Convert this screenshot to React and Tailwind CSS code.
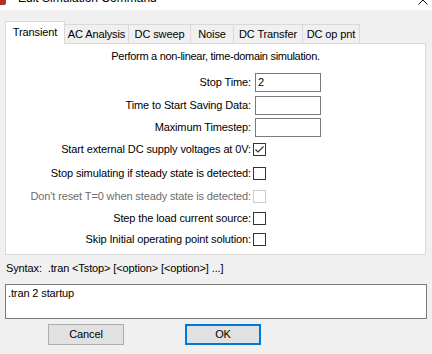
import React from "react";

const F = "font-['Liberation_Sans',Arial,sans-serif] tracking-[-0.12px]";

function TextBox({ value }) {
  return (
    <div className="w-[66px] h-[19px] border border-[#7a7a7a] bg-white pl-[2px] text-[11px] leading-[17px] text-black">
      {value}
    </div>
  );
}

function Check({ checked, disabled }) {
  return (
    <div
      className={
        "w-[13px] h-[13px] border bg-white flex items-center justify-center " +
        (disabled ? "border-[#cccccc]" : "border-[#333333]")
      }
    >
      {checked && (
        <svg width="11" height="11" viewBox="0 0 11 11">
          <polyline points="1.5,5.5 4,8 9.5,2.5" fill="none" stroke="#333333" strokeWidth="1.2" />
        </svg>
      )}
    </div>
  );
}

function InputRow({ label, value, className }) {
  return (
    <div className={"flex items-center h-[19px] " + (className || "")}>
      <div className="w-[245px] text-right text-[11px] leading-[13px] text-black">{label}</div>
      <div className="ml-[4px]">
        <TextBox value={value} />
      </div>
    </div>
  );
}

function CheckRow({ label, checked, disabled, className }) {
  return (
    <div className={"flex items-center h-[13px] " + (className || "")}>
      <div
        className={
          "w-[245px] text-right text-[11px] leading-[13px] whitespace-nowrap " +
          (disabled ? "text-[#6d6d6d]" : "text-black")
        }
      >
        {label}
      </div>
      <div className="ml-[2px]">
        <Check checked={checked} disabled={disabled} />
      </div>
    </div>
  );
}

const tabs = [
  { label: "AC Analysis", w: "w-[65px]" },
  { label: "DC sweep", w: "w-[63px]" },
  { label: "Noise", w: "w-[44px]" },
  { label: "DC Transfer", w: "w-[70px]" },
  { label: "DC op pnt", w: "w-[58px]" },
];

export default function App() {
  return (
    <div className={"w-[432px] h-[354px] bg-[#f0f0f0] overflow-hidden " + F}>
      {/* title bar */}
      <div className="h-[10px] bg-white overflow-hidden flex items-start">
        <div className="w-[6px] h-[5px] bg-[#b0302a] mt-0 rounded-br-[2px]" />
        <div className="ml-[12px] -mt-[9px] text-[12px] leading-[14px] text-black whitespace-nowrap tracking-normal">
          Edit Simulation Command
        </div>
        <svg className="ml-auto mr-[4px] -mt-[5px]" width="10" height="10" viewBox="0 0 10 10">
          <path d="M0.5 0.5 L9.5 9.5 M9.5 0.5 L0.5 9.5" stroke="#111" strokeWidth="1" />
        </svg>
      </div>

      <div className="px-[5px]">
        {/* tabs */}
        <div className="mt-[11px] h-[22px] flex items-end">
          <div className="relative z-10 -mb-px w-[60px] h-[23px] bg-white border border-b-0 border-[#d9d9d9] text-[11px] leading-[20px] text-black text-center">
            Transient
          </div>
          {tabs.map((t) => (
            <div
              key={t.label}
              className={
                "-ml-px h-[19px] border border-b-0 border-[#d9d9d9] bg-[#f0f0f0] text-[11px] leading-[18px] text-black text-center " +
                t.w
              }
            >
              {t.label}
            </div>
          ))}
        </div>

        {/* panel */}
        <div className="w-[421px] h-[212px] bg-white border border-[#d9d9d9] pt-[6px]">
          <div className="h-[13px] text-[11px] leading-[13px] text-black text-center tracking-[-0.3px]">
            Perform a non-linear, time-domain simulation.
          </div>
          <InputRow className="mt-[10px]" label="Stop Time:" value="2" />
          <InputRow className="mt-[4px]" label="Time to Start Saving Data:" value="" />
          <InputRow className="mt-[3px]" label="Maximum Timestep:" value="" />
          <CheckRow className="mt-[6px]" label="Start external DC supply voltages at 0V:" checked />
          <CheckRow className="mt-[11px]" label="Stop simulating if steady state is detected:" />
          <CheckRow className="mt-[10px]" label="Don't reset T=0 when steady state is detected:" disabled />
          <CheckRow className="mt-[9px]" label="Step the load current source:" />
          <CheckRow className="mt-[8px]" label="Skip Initial operating point solution:" />
        </div>

        {/* syntax */}
        <div className="mt-[7px] pl-[1px] h-[13px] text-[11px] leading-[13px] text-black whitespace-pre">
          {"Syntax:  .tran <Tstop> [<option> [<option>] ...]"}
        </div>

        {/* command text */}
        <div className="mt-[9px] w-[422px] h-[35px] border border-[#7a7a7a] bg-white px-[2px] pt-[2px] text-[11px] leading-[13px] text-black">
          .tran 2 startup
        </div>

        {/* buttons */}
        <div className="mt-[5px] flex pl-[43px] gap-[61px]">
          <div className="w-[76px] h-[21px] bg-[#e1e1e1] border border-[#adadad] text-[11px] leading-[19px] text-center text-black">
            Cancel
          </div>
          <div className="w-[76px] h-[21px] bg-[#e1e1e1] border-2 border-[#0078d7] text-[11px] leading-[17px] text-center text-black">
            OK
          </div>
        </div>
      </div>
    </div>
  );
}
